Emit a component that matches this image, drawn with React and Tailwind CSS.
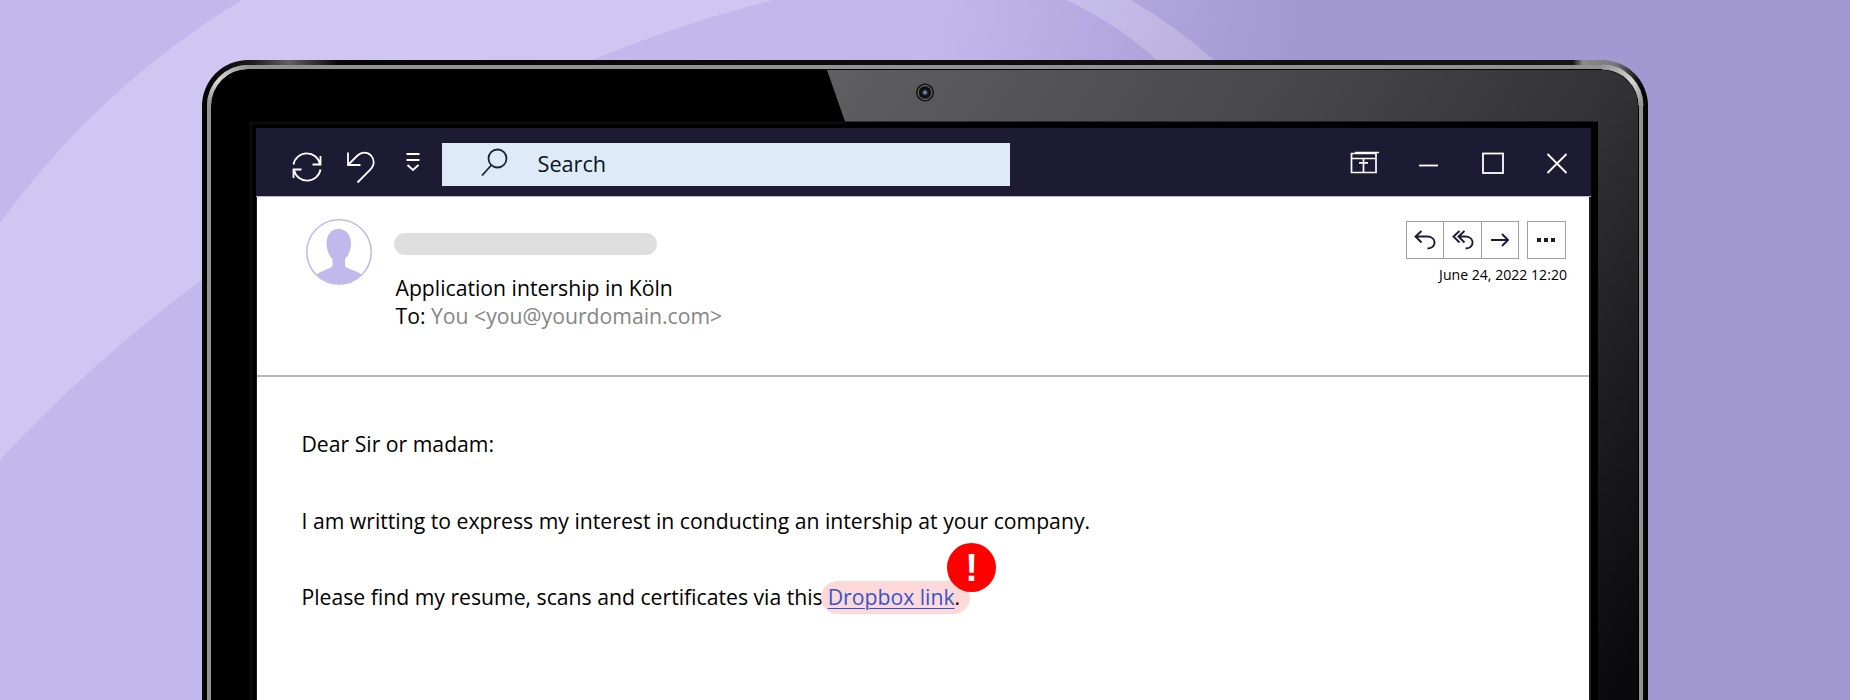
const ink = '#1c1b33';

function Backdrop() {
  return (
    <svg className="absolute inset-0" width="1850" height="700" viewBox="0 0 1850 700" aria-hidden="true">
      <defs>
        <linearGradient id="bg" gradientUnits="userSpaceOnUse" x1="940" y1="0" x2="1295" y2="50">
          <stop offset="0" stopColor="#c2b8ec" />
          <stop offset="1" stopColor="#a298d2" />
        </linearGradient>
        <linearGradient id="arc" gradientUnits="userSpaceOnUse" x1="1060" y1="0" x2="1215" y2="60">
          <stop offset="0" stopColor="#c8c0ec" />
          <stop offset="1" stopColor="#bab2dd" />
        </linearGradient>
      </defs>
      <rect width="1850" height="700" fill="url(#bg)" />
      <path d="M0 223Q101 85 242 0H773Q680 24 592 60Q350 150 203 279Q92 361 0 460Z" fill="#cfc7f2" />
      <path d="M1067 0H1131Q1177 27 1216 62H1159Q1120 26 1067 0Z" fill="url(#arc)" />
    </svg>
  );
}

function Laptop() {
  return (
    <svg className="absolute inset-0" width="1850" height="700" viewBox="0 0 1850 700" aria-hidden="true">
      <defs>
        <linearGradient id="gloss" gradientUnits="userSpaceOnUse" x1="850" y1="0" x2="1700" y2="560">
          <stop offset="0" stopColor="#606062" />
          <stop offset="0.4" stopColor="#48484a" />
          <stop offset="0.68" stopColor="#323234" />
          <stop offset="0.85" stopColor="#1b1a1e" />
          <stop offset="1" stopColor="#0a0a0d" />
        </linearGradient>
        <linearGradient id="edge" gradientUnits="userSpaceOnUse" x1="202" y1="0" x2="1648" y2="0">
          <stop offset="0" stopColor="#000" />
          <stop offset="0.035" stopColor="#1c1c1c" />
          <stop offset="0.06" stopColor="#606060" />
          <stop offset="0.095" stopColor="#050505" />
          <stop offset="0.948" stopColor="#151515" />
          <stop offset="0.955" stopColor="#8b8b8b" />
          <stop offset="0.978" stopColor="#777" />
          <stop offset="0.993" stopColor="#111" />
          <stop offset="1" stopColor="#000" />
        </linearGradient>
        <linearGradient id="shineLeft" gradientUnits="userSpaceOnUse" x1="208" y1="104" x2="250" y2="66">
          <stop offset="0" stopColor="#929292" />
          <stop offset="0.4" stopColor="#d8d8d4" />
          <stop offset="1" stopColor="#929292" />
        </linearGradient>
        <linearGradient id="shineRight" gradientUnits="userSpaceOnUse" x1="1600" y1="66" x2="1642" y2="104">
          <stop offset="0" stopColor="#929292" />
          <stop offset="0.6" stopColor="#d6d6d6" />
          <stop offset="1" stopColor="#929292" />
        </linearGradient>
        <radialGradient id="lens">
          <stop offset="0" stopColor="#8fb6d3" />
          <stop offset="0.3" stopColor="#47647c" />
          <stop offset="0.55" stopColor="#15191f" />
          <stop offset="1" stopColor="#08090b" />
        </radialGradient>
      </defs>
      <path d="M202 700V106A46 46 0 0 1 248 60H1602A46 46 0 0 1 1648 106V700Z" fill="url(#edge)" />
      <path d="M207 700V106A41 41 0 0 1 248 65H1602A41 41 0 0 1 1643 106V700Z" fill="#929292" />
      <path d="M211 700V106A37 37 0 0 1 248 69H1602A37 37 0 0 1 1639 106V700Z" fill="#000" />
      <path d="M209 106A39 39 0 0 1 248 67" fill="none" stroke="url(#shineLeft)" strokeWidth="4" />
      <path d="M1602 67A39 39 0 0 1 1641 106" fill="none" stroke="url(#shineRight)" strokeWidth="5" />
      <path d="M827 70H1602A36 36 0 0 1 1638 106V700H1598V121.500H845Z" fill="url(#gloss)" />
      <path d="M251 700V123H845" fill="none" stroke="#0b0b0b" strokeWidth="3" />
      <circle cx="925" cy="92.500" r="9" fill="#111" />
      <circle cx="925" cy="92.500" r="7" fill="#222" stroke="#747474" strokeWidth="1" />
      <circle cx="925" cy="92.500" r="5.500" fill="url(#lens)" />
    </svg>
  );
}

function RefreshIcon() {
  return (
    <svg className="shrink-0" width="30" height="30" viewBox="0 0 30 30" fill="none" stroke="#fff" strokeWidth="1.800">
      <path d="M1.500 12.500A13.500 13.500 0 0 1 28 12M28.500 4V12.500H20.500" />
      <path d="M28.500 17.500A13.500 13.500 0 0 1 2 18M1.500 26V17.500H9.500" />
    </svg>
  );
}

function UndoIcon() {
  return (
    <svg className="shrink-0" width="30" height="33" viewBox="0 0 30 33" fill="none" stroke="#fff" strokeWidth="1.800">
      <path d="M2 1.500V14H14.500M2 14L11.500 4.500C15.500 .7 21.500 .7 25 4.500C28.800 8.500 28.500 14 25 18L11.500 31.500" />
    </svg>
  );
}

function MoreCommandsIcon() {
  return (
    <svg className="shrink-0" width="14" height="20" viewBox="0 0 14 20" fill="none" stroke="#fff" strokeWidth="1.900">
      <path d="M.5 2H13.500M.5 8H13.500M1.500 13L7 18L12.500 13" />
    </svg>
  );
}

function SearchIcon() {
  return (
    <svg className="shrink-0" width="27" height="29" viewBox="0 0 27 29" fill="none" stroke="#1b2433" strokeWidth="1.800">
      <circle cx="16.500" cy="10.500" r="9" />
      <path d="M10.500 17L1 27.500" />
    </svg>
  );
}

function RibbonIcon() {
  return (
    <svg className="shrink-0" width="29" height="23" viewBox="0 0 29 23" fill="none" stroke="#fff" strokeWidth="1.700">
      <path d="M1.500 2.500H26V21.500H1.500ZM5 1.500H29M1.500 7.500H26M13.500 8V21.500M9 11.800H18" />
    </svg>
  );
}

function Titlebar() {
  return (
    <header className="flex h-[69px] shrink-0 items-start border-b border-[#b9b6c4] bg-[#1c1b33]">
      <div className="flex w-[186px] pl-[36px]">
        <div className="pt-[24px]"><RefreshIcon /></div>
        <div className="pt-[23px] pl-[24px]"><UndoIcon /></div>
        <div className="pt-[24px] pl-[30px]"><MoreCommandsIcon /></div>
      </div>
      <div className="mt-[15px] flex h-[43px] w-[568px] bg-[#deeaf8] pl-[39px]">
        <div className="pt-[5px]"><SearchIcon /></div>
        <span className="pl-[29.500px] text-[21.700px] leading-[41px] text-[#0b1220]">Search</span>
      </div>
      <div className="ml-auto flex pr-[23px]">
        <div className="pt-[23px]"><RibbonIcon /></div>
        <svg className="mt-[24px] ml-[39px]" width="21" height="22" stroke="#fff" strokeWidth="1.800"><path d="M1 13.500H20" /></svg>
        <svg className="mt-[24px] ml-[43px]" width="22" height="22" fill="none" stroke="#fff" strokeWidth="1.800"><rect x="1" y="1.500" width="20" height="19.500" /></svg>
        <svg className="mt-[24px] ml-[42px]" width="22" height="22" stroke="#fff" strokeWidth="1.800"><path d="M1.500 2L20.500 21M20.500 2L1.500 21" /></svg>
      </div>
    </header>
  );
}

function Avatar() {
  return (
    <svg className="shrink-0" width="66" height="66" viewBox="0 0 66 66">
      <circle cx="33" cy="33" r="32.200" fill="#fff" stroke="#c3bae8" strokeWidth="1.600" />
      <path d="M32.500 10C25 10 20.500 16 20.500 24C20.500 31.500 23.500 37.500 26.500 40V47C24 50.500 15 51 10.500 56A33 33 0 0 0 55.500 56C51 51 41.500 50.500 39 47V40C42 37.500 45 31.500 45 24C45 16 40 10 32.500 10Z" fill="#c1b8ec" />
    </svg>
  );
}

function Actions() {
  const cell = 'flex h-[38px] items-center justify-center border-[#a0a0a3]';
  return (
    <div className="flex gap-[8px]">
      <div className="flex">
        <div className={`${cell} w-[38px] border`}>
          <svg width="22" height="20" viewBox="0 0 22 20" fill="none" stroke={ink} strokeWidth="1.900"><path d="M7.500 1L1.500 6.500L7.500 12.500M1.500 6.500H13C23 6.500 23 18.500 13.500 18.500" /></svg>
        </div>
        <div className={`${cell} w-[38px] border-y border-r`}>
          <svg width="22" height="20" viewBox="0 0 22 20" fill="none" stroke={ink} strokeWidth="1.900"><path d="M7.500 1L1.500 6.500L7.500 12.500M12.500 1L6.500 6.500L12.500 12.500M6.500 6.500H13C23 6.500 23 18.500 13.500 18.500" /></svg>
        </div>
        <div className={`${cell} w-[37px] border-y border-r`}>
          <svg width="20" height="16" viewBox="0 0 20 16" fill="none" stroke={ink} strokeWidth="1.900"><path d="M1 8H18M12 2L18 8L12 14" /></svg>
        </div>
      </div>
      <div className={`${cell} w-[39px] border`}>
        <svg className="mr-[2px]" width="20" height="6" viewBox="0 0 20 6" fill={ink}><path d="M1 1H5V5H1ZM8 1H12V5H8ZM15 1H19V5H15Z" /></svg>
      </div>
    </div>
  );
}

export default function App() {
  return (
    <div className="relative h-[700px] w-[1850px] overflow-hidden bg-[#c2b8ec] font-['Open_Sans',sans-serif]">
      <Backdrop />
      <Laptop />
      <div className="relative flex h-full pt-[128px] pl-[256px]">
        <div className="flex w-[1335px] flex-col bg-[#1c1b33]">
          <Titlebar />
          <main className="mr-[2px] ml-[1px] flex-1 bg-white text-[21.200px] text-black">
            <section className="flex h-[180px] justify-between border-b-2 border-[#b9b9b9] pl-[49px]">
              <div className="flex pt-[22px]">
                <Avatar />
                <div className="ml-[22px]">
                  <div className="mt-[14px] h-[22px] w-[263px] rounded-full bg-[#dedede]" />
                  <div className="mt-[19px] ml-[1.500px] leading-[28px] whitespace-nowrap">
                    <p>Application intership in Köln</p>
                    <p>To: <span className="text-[#858585]">You &lt;you@yourdomain.com&gt;</span></p>
                  </div>
                </div>
              </div>
              <div className="flex flex-col items-end pt-[24px] pr-[22px]">
                <div className="pr-[1px]"><Actions /></div>
                <time className="mt-[6px] text-[14.100px] leading-[20px] font-medium">June 24, 2022 12:20</time>
              </div>
            </section>
            <section className="pt-[52px] pl-[44.500px] leading-[30px] whitespace-nowrap">
              <p>Dear Sir or madam:</p>
              <p className="mt-[47px]">I am writting to express my interest in conducting an intership at your company.</p>
              <p className="mt-[46px]">
                Please find my resume, scans and certificates via this
                <span className="relative isolate ml-[5px] inline-block">
                  <span className="absolute top-[-1px] left-[-7px] -z-10 h-[33px] w-[149px] rounded-full bg-[#ffd9d9]" />
                  <a className="text-[#3355cf] underline decoration-1 underline-offset-[3px]">Dropbox link</a>.
                  <span className="absolute top-[-39px] left-[119.500px] flex size-[49px] items-center justify-center rounded-full bg-[#fe0000] font-['Liberation_Sans',sans-serif] text-[38px] leading-none font-bold text-white">!</span>
                </span>
              </p>
            </section>
          </main>
        </div>
      </div>
    </div>
  );
}
